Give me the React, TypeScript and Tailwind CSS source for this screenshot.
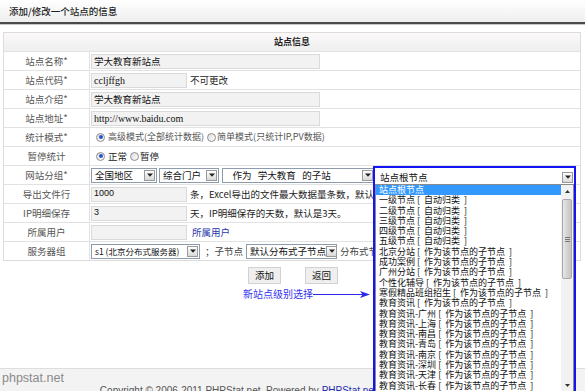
import React from "react";

const Arrow = () => (
  <span className="flex h-[11px] w-[11px] shrink-0 items-center justify-center border border-[#9a9a9a] bg-gradient-to-b from-white to-[#d8d8d8]">
    <svg width="6" height="4" viewBox="0 0 6 4">
      <path d="M0 0.5h6L3 3.8z" fill="#222" />
    </svg>
  </span>
);

const Select = ({ text, className }: { text: string; className: string }) => (
  <div
    className={`flex h-[15px] shrink-0 items-center justify-between border border-[#8d9bad] bg-white pl-[3px] pr-[1px] text-[#111] ${className}`}
  >
    <span className="whitespace-pre">{text}</span>
    <Arrow />
  </div>
);

const Radio = ({ on }: { on?: boolean }) => (
  <span className="flex h-[9px] w-[9px] shrink-0 items-center justify-center rounded-full border border-[#8e8e8e] bg-gradient-to-br from-[#dcdcdc] to-white">
    {on && <span className="h-[4px] w-[4px] rounded-full bg-[#2456c8]" />}
  </span>
);

const Field = ({ children, className }: { children?: React.ReactNode; className: string }) => (
  <div
    className={`flex h-[15px] shrink-0 items-center border border-[#dadada] bg-[#f2f2f2] px-[2px] text-[#111] ${className}`}
  >
    {children}
  </div>
);

const Row = ({ label, children }: { label: string; children?: React.ReactNode }) => (
  <div className="flex h-[19px] border-t border-[#e2e2e2]">
    <div className="flex w-[86px] shrink-0 items-center justify-center border-r border-[#e2e2e2] text-[#555]">
      {label}
    </div>
    <div className="flex min-w-0 flex-1 items-center gap-[3px] overflow-hidden whitespace-nowrap pl-[1px]">
      {children}
    </div>
  </div>
);

const items = [
  "站点根节点",
  "一级节点 [  自动归类  ]",
  "二级节点 [  自动归类  ]",
  "三级节点 [  自动归类  ]",
  "四级节点 [  自动归类  ]",
  "五级节点 [  自动归类  ]",
  "北京分站 [  作为该节点的子节点  ]",
  "成功案例 [  作为该节点的子节点  ]",
  "广州分站 [  作为该节点的子节点  ]",
  "个性化辅导 [  作为该节点的子节点  ]",
  "寒假精品班组招生 [  作为该节点的子节点  ]",
  "教育资讯 [  作为该节点的子节点  ]",
  "教育资讯-广州 [  作为该节点的子节点  ]",
  "教育资讯-上海 [  作为该节点的子节点  ]",
  "教育资讯-南昌 [  作为该节点的子节点  ]",
  "教育资讯-青岛 [  作为该节点的子节点  ]",
  "教育资讯-南京 [  作为该节点的子节点  ]",
  "教育资讯-深圳 [  作为该节点的子节点  ]",
  "教育资讯-天津 [  作为该节点的子节点  ]",
  "教育资讯-长春 [  作为该节点的子节点  ]",
];

export default function App() {
  return (
    <div className="relative flex h-[391px] w-[585px] flex-col overflow-hidden bg-white font-['Noto_Sans_CJK_SC',sans-serif] text-[9px] text-[#333]">
      {/* title bar */}
      <div className="flex h-[22px] shrink-0 items-center bg-gradient-to-b from-white to-[#eeeeee] pl-[9px] text-[9.5px] font-medium text-[#222]">
        添加/修改一个站点的信息
      </div>
      <div className="h-[2px] shrink-0 bg-[#4a4a4a]" />
      <div className="h-[1px] shrink-0 bg-[#c8c8c8]" />

      {/* form table */}
      <div className="ml-[3px] mt-[7px] w-[578px] shrink-0 border border-[#dcdcdc] text-[9.5px]">
        <div className="flex h-[18px] items-center justify-center bg-gradient-to-b from-[#fbf8f8] to-[#efefef] text-[9px] font-bold text-[#222]">
          站点信息
        </div>
        <Row label="站点名称*">
          <Field className="w-[229px]">学大教育新站点</Field>
        </Row>
        <Row label="站点代码*">
          <Field className="w-[96px] font-['Liberation_Serif',serif] text-[10px]">ccljffgh</Field>
          <span className="text-[#222]">不可更改</span>
        </Row>
        <Row label="站点介绍*">
          <Field className="w-[229px]">学大教育新站点</Field>
        </Row>
        <Row label="站点地址*">
          <Field className="w-[229px] font-['Liberation_Serif',serif] text-[10px]">http://www.baidu.com</Field>
        </Row>
        <Row label="统计模式*">
          <span className="ml-[2px]" />
          <Radio on />
          <span className="text-[9px] text-[#555]">高级模式(全部统计数据)</span>
          <Radio />
          <span className="-ml-[2px] text-[9px] text-[#555]">简单模式(只统计IP,PV数据)</span>
        </Row>
        <Row label="暂停统计">
          <span className="ml-[2px]" />
          <Radio on />
          <span className="text-[#222]">正常</span>
          <Radio />
          <span className="-ml-[2px] text-[#222]">暂停</span>
        </Row>
        <Row label="网站分组*">
          <Select text="全国地区" className="w-[66px]" />
          <Select text="综合门户" className="-ml-[1px] w-[60px]" />
          <Select text="   作为   学大教育   的子站" className="w-[153px]" />
        </Row>
        <Row label="导出文件行">
          <Field className="w-[96px] font-['Liberation_Sans',sans-serif] text-[9px]">1000</Field>
          <span className="text-[#222]">条，Excel导出的文件最大数据量条数，默认是1000条</span>
        </Row>
        <Row label="IP明细保存">
          <Field className="w-[96px] font-['Liberation_Sans',sans-serif] text-[9px]">3</Field>
          <span className="text-[#222]">天，IP明细保存的天数，默认是3天。</span>
        </Row>
        <Row label="所属用户">
          <Field className="w-[96px]" />
          <span className="ml-[2px] text-[#1f35a8]">所属用户</span>
        </Row>
        <Row label="服务器组">
          <Select text="s1 (北京分布式服务器)" className="w-[109px] text-[8.5px]" />
          <span className="ml-[2px] text-[#444]">；</span>
          <span className="-ml-[3px] text-[#444]">子节点</span>
          <Select text="默认分布式子节点" className="w-[91px]" />
          <span className="text-[#444]">分布式节点</span>
        </Row>
      </div>

      {/* buttons */}
      <div className="mt-[6px] flex shrink-0 justify-center gap-[24px] pl-[1px]">
        <button className="flex h-[17px] w-[33px] items-center justify-center border border-[#d2d2d2] bg-[#efefef] text-[9.5px] text-[#111]">
          添加
        </button>
        <button className="flex h-[17px] w-[33px] items-center justify-center border border-[#d2d2d2] bg-[#efefef] text-[9.5px] text-[#111]">
          返回
        </button>
      </div>

      {/* annotation */}
      <div className="mt-[4px] flex shrink-0 items-center pl-[243px]">
        <span className="text-[10px] leading-[12px] text-[#3535ee]">新站点级别选择</span>
        <svg width="58" height="9" viewBox="0 0 58 9" className="mt-[1px]">
          <line x1="0" y1="4.5" x2="50" y2="4.5" stroke="#2a2ae8" strokeWidth="1" />
          <path d="M47 1L57 4.5L47 8L49.5 4.5z" fill="#2a2ae8" />
        </svg>
      </div>

      {/* footer */}
      <div className="mt-auto flex h-[23px] shrink-0 border-t border-[#dedede] bg-[#f3f3f3] font-['Liberation_Sans',sans-serif]">
        <span className="pl-[2px] pt-[2px] text-[12.5px] leading-[14px] text-[#8a8a8a]">phpstat.net</span>
        <span className="ml-[36px] whitespace-nowrap pt-[16px] text-[10px] leading-[12px] text-[#555]">
          Copyright © 2006-2011 PHPStat.net. Powered by <span className="text-[#1a2bb0]">PHPStat.net</span>. PHPStat
        </span>
      </div>

      {/* open dropdown */}
      <div className="absolute left-[373px] top-[166px] z-10 flex h-[240px] w-[203px] flex-col border-2 border-[#1414f5] bg-white">
        <div className="flex h-[16px] shrink-0 items-center justify-between pl-[5px] pr-[1px] pt-[2px] text-[9.5px] text-[#111]">
          <span>站点根节点</span>
          <Arrow />
        </div>
        <div className="flex min-h-0 flex-1 border border-[#8a8a8a]">
          <div className="flex-1 overflow-hidden">
            {items.map((t, i) => (
              <div
                key={i}
                className={`h-[10.3px] whitespace-pre pl-[3px] text-[9px] leading-[10.3px] ${
                  i === 0 ? "bg-[#3399ff] text-white" : "text-[#111]"
                }`}
              >
                {t}
              </div>
            ))}
          </div>
          {/* scrollbar */}
          <div className="flex w-[12px] shrink-0 flex-col bg-[#f2f2f2]">
            <div className="flex h-[12px] items-center justify-center">
              <svg width="5" height="3" viewBox="0 0 5 3">
                <path d="M0 3h5L2.5 0z" fill="#333" />
              </svg>
            </div>
            <div className="mx-[1px] mt-[2px] flex h-[80px] items-center justify-center rounded-[2px] border border-[#a8a8a8] bg-gradient-to-r from-[#e8e8e8] via-[#d4d4d4] to-[#c4c4c4]">
              <div className="flex flex-col gap-[1px]">
                <span className="h-[1px] w-[5px] bg-[#777]" />
                <span className="h-[1px] w-[5px] bg-[#777]" />
                <span className="h-[1px] w-[5px] bg-[#777]" />
              </div>
            </div>
            <div className="flex-1" />
          </div>
        </div>
      </div>
      <div className="absolute left-[561px] top-[381px] z-20 flex h-[8px] w-[12px] items-center justify-center">
        <svg width="5" height="3" viewBox="0 0 5 3">
          <path d="M0 0h5L2.5 3z" fill="#333" />
        </svg>
      </div>
    </div>
  );
}
